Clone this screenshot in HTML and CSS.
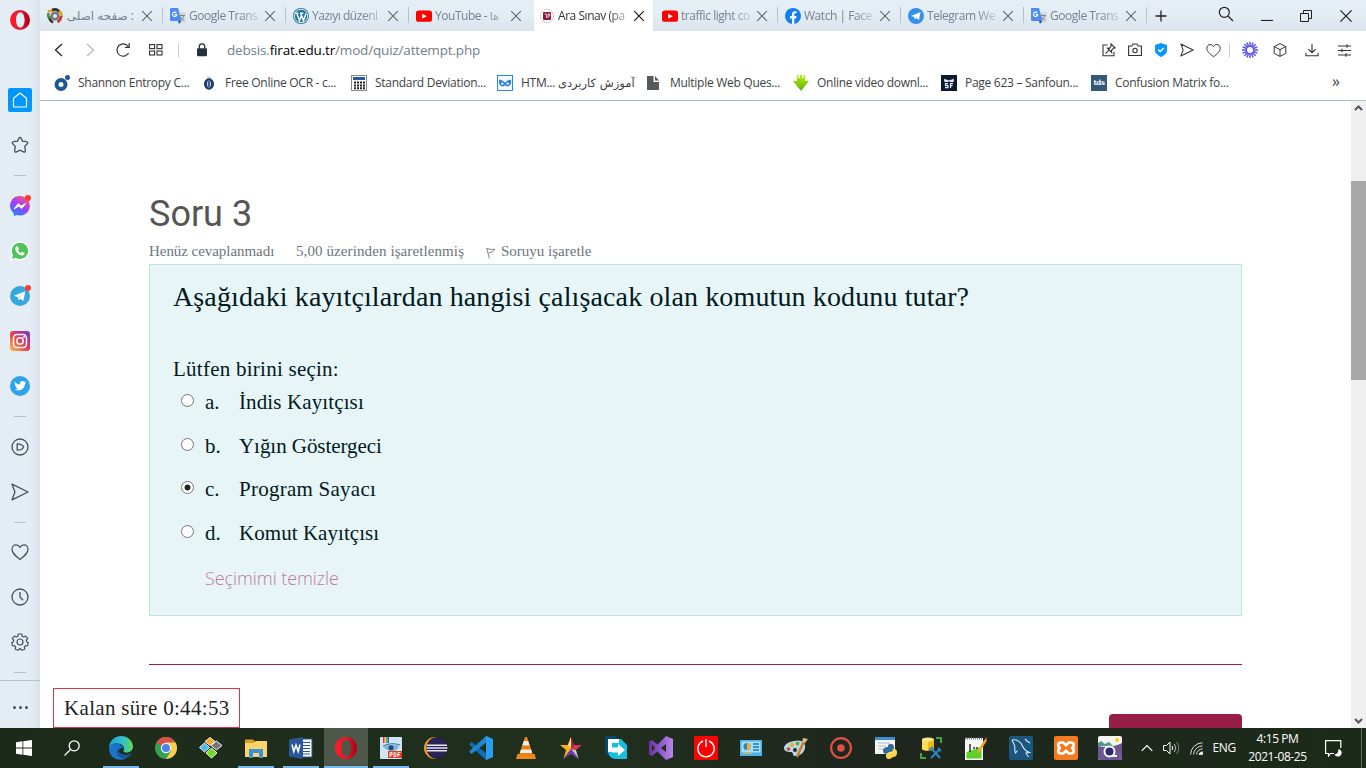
FILE: index.html
```html
<!DOCTYPE html>
<html lang="tr">
<head>
<meta charset="utf-8">
<title>Ara Sınav</title>
<link rel="stylesheet" href="styles.css">
</head>
<body>
<svg class="defs" width="0" height="0" aria-hidden="true">
  <defs>
    <linearGradient id="gOpera" x1="0" y1="0" x2="1" y2="0"><stop offset="0" stop-color="#ff1b2d"/><stop offset=".5" stop-color="#e8192c"/><stop offset="1" stop-color="#a70014"/></linearGradient>
    <linearGradient id="gMsg" x1=".2" y1="1" x2=".8" y2="0"><stop offset="0" stop-color="#1a8cff"/><stop offset=".5" stop-color="#9b3fff"/><stop offset="1" stop-color="#ff5a6e"/></linearGradient>
    <linearGradient id="gInsta" x1="0" y1="1" x2="1" y2="0"><stop offset="0" stop-color="#fdc44f"/><stop offset=".4" stop-color="#f0503f"/><stop offset=".7" stop-color="#c32b90"/><stop offset="1" stop-color="#5a4bd0"/></linearGradient>
    <linearGradient id="gEdge" x1="0" y1=".3" x2="1" y2=".3"><stop offset="0" stop-color="#1f9fe0"/><stop offset=".6" stop-color="#35c3c9"/><stop offset="1" stop-color="#62d94b"/></linearGradient>
    <linearGradient id="gVs" x1="0" y1="0" x2="1" y2="0"><stop offset="0" stop-color="#6a2fa5"/><stop offset="1" stop-color="#b886ea"/></linearGradient>
    <linearGradient id="gArrow" x1="0" y1="0" x2="0" y2="1"><stop offset="0" stop-color="#b5f000"/><stop offset="1" stop-color="#5fae10"/></linearGradient>
    <symbol id="x" viewBox="0 0 12 12"><path d="M1.200 1.200l9.600 9.600M10.800 1.200l-9.600 9.600" fill="none" stroke="currentColor" stroke-width="1.100"/></symbol>
    <symbol id="yt" viewBox="0 0 16 16"><rect y="2.400" width="16" height="11.400" rx="2.600" fill="#f00"/><path d="M6.200 5.700l4.600 2.500-4.600 2.500z" fill="#fff"/></symbol>
    <symbol id="gt" viewBox="0 0 16 16"><path d="M6 4h9a1 1 0 0 1 1 1v10H8z" fill="#dcdcdc"/><path d="M9.500 7.500h5.500M12.200 6.300v1.200M14 7.500c-.5 2-2 3.500-4 4.500M10.500 8.500c.8 2 2 3 3.800 3.800" stroke="#7d8a90" fill="none"/><path d="M1 0h7l3.500 13H1a1 1 0 0 1-1-1V1a1 1 0 0 1 1-1z" fill="#4d8bf5"/><path d="M8 13h3.500L9 16z" fill="#1d59c4"/><path d="M6.300 4.900A2.200 2.200 0 1 0 6.800 6.600H4.700" stroke="#fff" fill="none" stroke-width="1.100"/></symbol>
    <symbol id="opera" viewBox="0 0 20 20"><path fill-rule="evenodd" fill="url(#gOpera)" d="M10 0a10 10 0 1 0 0 20A10 10 0 1 0 10 0zM10.300 2.300c2.500 0 4.300 3.400 4.300 7.700s-1.800 7.700-4.300 7.700S6 14.300 6 10s1.800-7.700 4.300-7.700z"/></symbol>
    <symbol id="heart" viewBox="0 0 18 18"><path d="M9 16.500C4 12.500 1 10 1 6.300 1 3.700 2.800 1.800 5 1.800c1.800 0 3.200 1 4 2.600 .8-1.600 2.200-2.600 4-2.600 2.200 0 4 1.900 4 4.500C17 10 14 12.500 9 16.500z" fill="none" stroke="currentColor" stroke-width="1.200" stroke-linejoin="round"/></symbol>
    <symbol id="send" viewBox="0 0 18 18"><path d="M1 1.200L17 9 1 16.800 4 9z" fill="none" stroke="currentColor" stroke-width="1.300" stroke-linejoin="round"/></symbol>
  </defs>
</svg>

<div class="screen">
  <div class="browser">
    <aside class="sidebar">
      <div class="side-logo"><svg width="20" height="20"><use href="#opera"/></svg></div>
      <div class="side-item"><span class="home"><svg width="16" height="16" viewBox="0 0 16 16"><path d="M1.500 6.200L8 1l6.500 5.200V14a1 1 0 0 1-1 1h-11a1 1 0 0 1-1-1z" fill="none" stroke="#fff" stroke-width="1.200" stroke-linejoin="round"/></svg></span></div>
      <div class="side-item"><svg width="18" height="18" viewBox="0 0 18 18"><path d="M9 1.300c.5 0 .8.400 1 .8l1.500 3 3.900.6c1.300.2 1.700 1.300.8 2.200l-2.500 2.600.6 3.900c.2 1.400-.7 2-1.900 1.400L9 14.200l-3.400 1.600c-1.200.6-2.100 0-1.900-1.400l.6-3.900L1.800 7.900c-.9-.9-.5-2 .8-2.200l3.900-.6 1.500-3c.2-.4.5-.8 1-.8z" fill="none" stroke="currentColor" stroke-width="1.300"/></svg></div>
      <hr class="side-sep">
      <div class="side-item badge"><svg width="20" height="20" viewBox="0 0 20 20"><path d="M10 0a10 9.700 0 1 1-3 19l-3 1-.6-3A9.700 9.700 0 0 1 10 0z" fill="url(#gMsg)"/><path d="M4.200 12.700l4-5 3 2.400 4.600-2.700-4 5-3-2.300z" fill="#fff" stroke="#fff" stroke-linejoin="round"/></svg></div>
      <div class="side-item"><svg width="20" height="20" viewBox="0 0 20 20"><path d="M10.300 1a8.800 8.800 0 1 1-4.600 16.500L1 18.800l1.400-4.600A8.800 8.800 0 0 1 10.300 1z" fill="#4fc35a" stroke="#fff" stroke-width="1.300"/><path d="M6.500 5.300l1.500.2 1 2.500-1 1.200c.7 1.400 1.600 2.200 3 2.800l1.200-1.200 2.300 1.200c.2 1.700-1.200 2.600-2.600 2.500C8.700 14.200 5.600 11 5.300 8c-.1-1.200.5-2.100 1.200-2.700z" fill="#fff"/></svg></div>
      <div class="side-item badge"><svg width="20" height="20" viewBox="0 0 20 20"><circle cx="10" cy="10" r="10" fill="#38a6dc"/><path d="M4 9.800l11.300-4.500-1.900 9.700-3.200-2.300-1.800 1.800-.3-3z" fill="#fff"/><path d="M8.200 11.400l5-4.200-4 4.800z" fill="#a9d2ea"/></svg></div>
      <div class="side-item"><svg width="20" height="20" viewBox="0 0 20 20"><rect width="20" height="20" rx="3" fill="url(#gInsta)"/><rect x="3.500" y="3.500" width="13" height="13" rx="3.500" fill="none" stroke="#fff" stroke-width="1.500"/><circle cx="10" cy="10" r="3.200" fill="none" stroke="#fff" stroke-width="1.500"/><circle cx="14" cy="6" r="1" fill="#fff"/></svg></div>
      <div class="side-item"><svg width="20" height="20" viewBox="0 0 20 20"><circle cx="10" cy="10" r="10" fill="#2ba3ef"/><path d="M4.800 5.800c1.500 1.700 3 2.500 5 2.600-.3-3 2.800-4.200 4.600-2.500l1.600-.6-1 1.500 1.300-.3-1.400 1.400c0 4.500-4.800 8.200-10.400 5.600 1.500 0 2.600-.3 3.300-1-1.200-.2-1.900-.8-2.200-1.700h1C5.400 10.300 4.800 9.500 4.800 8.300l1 .3C4.700 7.800 4.400 6.800 4.800 5.800z" fill="#fff"/></svg></div>
      <hr class="side-sep">
      <div class="side-item"><svg width="18" height="18" viewBox="0 0 18 18" fill="none" stroke="currentColor" stroke-width="1.300"><circle cx="9" cy="9" r="8"/><path d="M6.200 5.800c3 0 5.500 1.200 6.500 3.200-1 2-3.500 3.200-6.500 3.200z" stroke-linejoin="round"/></svg></div>
      <div class="side-item"><svg width="18" height="18"><use href="#send"/></svg></div>
      <hr class="side-sep">
      <div class="side-item"><svg width="18" height="18"><use href="#heart"/></svg></div>
      <div class="side-item"><svg width="18" height="18" viewBox="0 0 18 18" fill="none" stroke="currentColor" stroke-width="1.300"><circle cx="9" cy="9" r="8"/><path d="M9 4v5l3 3.300"/></svg></div>
      <div class="side-item"><svg width="18" height="18" viewBox="0 0 18 18" fill="none" stroke="currentColor" stroke-width="1.200" stroke-linejoin="round"><circle cx="9" cy="9" r="3"/><path d="M7.300 1h3.400l.5 2.300 1.300.7 2.200-1 1.900 2.400-1.300 1.900.3 1.400 1.700 1-.7 3-2.300.2-.9 1.100.3 2.200-2.700 1L9 15.500 7 17.200l-2.700-1 .3-2.200-.9-1.100-2.300-.2-.7-3 1.700-1 .3-1.400L1.400 5.400 3.300 3l2.200 1 1.300-.7z"/></svg></div>
      <hr class="side-sep last">
      <div class="side-more"><i></i><i></i><i></i></div>
    </aside>

    <div class="window">
      <div class="tabbar">
        <div class="tab"><svg class="fav" viewBox="0 0 16 16" fill="none" stroke-width="2.600"><path d="M1 3.500Q4 2 7 3.500" stroke="#e9a13c"/><path d="M5 2q5-2 8 2.500" stroke="#333"/><path d="M12 3q3 2 2.500 6" stroke="#e0a020"/><path d="M14 8q0 4-3.500 6" stroke="#c9342d"/><path d="M2 8q0 4 4 6.500" stroke="#333"/><path d="M2 5q-2 3 1 5" stroke="#3f8f3f"/><circle cx="8" cy="8" r="3.300" stroke="#777"/></svg><span class="tab-text fa" dir="rtl">: صفحه اصلی</span><svg class="close"><use href="#x"/></svg></div>
        <div class="tab"><svg class="fav"><use href="#gt"/></svg><span class="tab-text">Google Trans</span><svg class="close"><use href="#x"/></svg></div>
        <div class="tab"><svg class="fav" viewBox="0 0 16 16"><circle cx="8" cy="8" r="8" fill="#21759b"/><circle cx="8" cy="8" r="6.700" fill="none" stroke="#fff" stroke-width=".9"/><path d="M2.300 5.200h3M6.800 5.200h3.600M3.800 5.400l2.700 7.200 1.900-5.200M7.800 5.400l2.600 7.200L13 5.500" fill="none" stroke="#fff" stroke-width="1.400"/></svg><span class="tab-text">Yazıyı düzenl</span><svg class="close"><use href="#x"/></svg></div>
        <div class="tab"><svg class="fav"><use href="#yt"/></svg><span class="tab-text">YouTube - <em>ها</em></span><svg class="close"><use href="#x"/></svg></div>
        <div class="tab active"><svg class="fav" viewBox="0 0 16 16"><circle cx="8" cy="8" r="6.600" fill="#fff" stroke="#aaa" stroke-dasharray="1.500 1"/><rect x="4" y="4" width="8" height="8" rx="1" fill="#8b1a42"/><path d="M5.500 6h2v4M9 10V6h1.800v2H9" stroke="#e7bccb" fill="none"/></svg><span class="tab-text">Ara Sınav (pa</span><svg class="close"><use href="#x"/></svg></div>
        <div class="tab"><svg class="fav"><use href="#yt"/></svg><span class="tab-text">traffic light co</span><svg class="close"><use href="#x"/></svg></div>
        <div class="tab"><svg class="fav" viewBox="0 0 16 16"><circle cx="8" cy="8" r="8" fill="#1480f0"/><path d="M7 16v-5.500H5V8h2V6.300C7 4.200 8.200 3.200 10 3.200l1.600.1v2h-1c-1 0-1.300.5-1.300 1.300V8h2.200l-.4 2.500H9.300V16z" fill="#fff"/></svg><span class="tab-text">Watch | Face</span><svg class="close"><use href="#x"/></svg></div>
        <div class="tab"><svg class="fav" viewBox="0 0 16 16"><circle cx="8" cy="8" r="8" fill="#3390ec"/><path d="M3 8l9.500-4-1.500 8-2.800-2-1.500 1.500-.3-2.600z" fill="#fff"/></svg><span class="tab-text">Telegram We</span><svg class="close"><use href="#x"/></svg></div>
        <div class="tab"><svg class="fav"><use href="#gt"/></svg><span class="tab-text">Google Trans</span><svg class="close"><use href="#x"/></svg></div>
        <svg class="newtab" width="12" height="12" viewBox="0 0 12 12"><path d="M6 .5v11M.5 6h11" stroke="currentColor" stroke-width="1.300"/></svg>
        <div class="wincontrols">
          <svg class="find" width="16" height="16" viewBox="0 0 16 16" fill="none" stroke="currentColor" stroke-width="1.200"><circle cx="6.300" cy="6.300" r="5"/><path d="M10 10l5 5"/></svg>
          <svg class="min" width="12" height="12" viewBox="0 0 12 12"><path d="M0 11.500h12" stroke="currentColor" stroke-width="1.200"/></svg>
          <svg width="12" height="12" viewBox="0 0 12 12" fill="none" stroke="currentColor"><path d="M.5 3.500h8v8h-8zM3.500 3.500v-3h8v8h-3"/></svg>
          <svg width="14" height="14"><use href="#x"/></svg>
        </div>
      </div>

      <div class="addressbar">
        <div class="nav">
          <svg width="10" height="14" viewBox="0 0 10 14"><path d="M8 1L1.500 7 8 13" fill="none" stroke="#222" stroke-width="1.300"/></svg>
          <svg width="10" height="14" viewBox="0 0 10 14"><path d="M2 1l6.500 6L2 13" fill="none" stroke="#bbb" stroke-width="1.300"/></svg>
          <svg width="15" height="14" viewBox="0 0 15 14"><path d="M12.600 10A6.200 6.200 0 1 1 12.300 3.500M13.200 0v4.300H9" fill="none" stroke="#333" stroke-width="1.200"/></svg>
          <svg class="grid" width="14" height="12" viewBox="0 0 14 12" fill="none" stroke="#333" stroke-width="1.100"><rect x=".6" y=".6" width="5" height="4"/><rect x="8" y=".6" width="5" height="4"/><rect x=".6" y="7" width="5" height="4"/><rect x="8" y="7" width="5" height="4"/></svg>
        </div>
        <i class="vbar"></i>
        <svg class="lock" width="10" height="14" viewBox="0 0 10 14"><path d="M2.300 6V3.500a2.700 2.700 0 0 1 5.400 0V6" fill="none" stroke="#25313b" stroke-width="1.300"/><rect y="5.200" width="10" height="8" rx="1" fill="#25313b"/></svg>
        <span class="url">debsis.<b>firat.edu.tr</b>/mod/quiz/attempt.php</span>
        <div class="tools">
          <svg width="14" height="14" viewBox="0 0 14 14" fill="none" stroke="currentColor" stroke-width="1.100"><path d="M5.500 2H1v10.800h11V9M9 .8l4 4-1.300.3-2.200 2.300.2 2L5.500 5.200l2 .2 1.700-2.500zM7 7.200L3.500 10.700"/></svg>
          <svg width="14" height="14" viewBox="0 0 14 14" fill="none" stroke="currentColor" stroke-width="1.100"><path d="M.6 3h3.200L5 1h4l1.200 2h3.200v9.500H.6z"/><circle cx="7" cy="7.500" r="2.200"/></svg>
          <svg width="14" height="14" viewBox="0 0 14 14"><path d="M7 0l6 2v5.500c0 3-3 5-6 6.500-3-1.500-6-3.500-6-6.500V2z" fill="#0996ff"/><path d="M4.200 6.500l2 2 3.600-3.600" fill="none" stroke="#fff" stroke-width="1.400"/></svg>
          <svg width="14" height="14"><use href="#send"/></svg>
          <svg width="15" height="15"><use href="#heart"/></svg>
          <i class="vbar"></i>
          <svg width="16" height="16" viewBox="0 0 16 16"><path d="M8 0v5M8 11v5M0 8h5M11 8h5M2.300 2.300l3.500 3.500M10.200 10.200l3.500 3.500M2.300 13.700l3.500-3.500M10.200 5.800l3.500-3.500M4.900.6l1.900 4.600M9.200 10.800l1.900 4.600M.6 11.100l4.600-1.900M10.800 6.800l4.600-1.900M.6 4.900l4.600 1.900M10.800 9.200l4.600 1.900M4.900 15.400l1.900-4.600M9.200 5.200l1.900-4.600" stroke="#5b50ee" stroke-width="1.500"/></svg>
          <svg class="cube" width="14" height="14" viewBox="0 0 14 14" fill="none" stroke="currentColor" stroke-linejoin="round"><path d="M7 .6l5.800 3v6.800L7 13.400l-5.800-3V3.600zM1.200 3.600L7 6.600l5.800-3M7 6.600v6.800"/></svg>
          <svg class="down" width="14" height="14" viewBox="0 0 14 14" fill="none" stroke="currentColor" stroke-width="1.100"><path d="M7 1v8.500M3.500 6.200L7 9.700l3.500-3.500M1 10v2.800h12V10"/></svg>
          <svg class="tune" width="13" height="13" viewBox="0 0 13 13" stroke="currentColor" stroke-width="1.100"><path d="M0 2h13M0 6.500h13M0 11h13M9 .3v3.500M4 4.700v3.600M8 9.300v3.400"/></svg>
        </div>
      </div>

      <div class="bookmarks">
        <div class="bm"><svg class="fav" viewBox="0 0 16 16"><circle cx="7" cy="9.500" r="4.500" fill="none" stroke="#1f5592" stroke-width="4"/><circle cx="13.500" cy="2.600" r="2.500" fill="#1f5592"/></svg><span>Shannon Entropy C...</span></div>
        <div class="bm w2"><svg class="fav" viewBox="0 0 16 16"><path d="M5 4q3-6 6 0z" fill="#d8d8d8"/><ellipse cx="8" cy="9" rx="5" ry="5.800" fill="#1c3a6c"/><ellipse cx="8" cy="9" rx="2" ry="3.400" fill="#cdd8ec"/><path d="M8 6v6" stroke="#1c3a6c" stroke-width="1.500"/></svg><span>Free Online OCR - c...</span></div>
        <div class="bm w3"><svg class="fav" viewBox="0 0 16 16"><rect x=".5" y=".5" width="15" height="15" fill="#fff" stroke="#888"/><rect x="2" y="2" width="12" height="3" fill="#2459a6"/><path d="M3 7.500h11M3 10.500h11M3 13.200h11" stroke="#222" stroke-width="2" stroke-dasharray="2 1"/></svg><span>Standard Deviation...</span></div>
        <div class="bm w4"><svg class="fav" viewBox="0 0 16 16" fill="none"><rect x=".5" y=".5" width="15" height="15" fill="#f3f9ff" stroke="#2c86e8"/><path d="M2 4.500l4 1.200 2 2 2-2 4-1.200v4.200l-2.200 2.600H9L8 10l-1 1.300H4.200L2 8.700z" fill="#2580e6"/><circle cx="5.300" cy="8.600" r="1.200" fill="#fff"/><circle cx="10.700" cy="8.600" r="1.200" fill="#fff"/></svg><span>HTM... <em>آموزش کاربردی</em></span></div>
        <div class="bm w5"><svg class="fav" viewBox="0 0 16 16"><path d="M1 1h6.500v6H13v8H1z" fill="#58595b"/><path d="M9 1l4 4.500H9z" fill="#58595b"/></svg><span>Multiple Web Ques...</span></div>
        <div class="bm w6"><svg class="fav" viewBox="0 0 16 16"><path d="M4 0h1.500v3H7V0h2v3h1.500V0H12v6h4l-8 10L0 6h4z" fill="url(#gArrow)"/></svg><span>Online video downl...</span></div>
        <div class="bm w7"><svg class="fav" viewBox="0 0 16 16"><rect width="16" height="16" fill="#0b1a30"/><path d="M3 6.500l.5-3 2 1.200h1L8 5.500l1.500-.8h1l2-1.200.5 3-2 .8-3-.8-3 .8z" fill="#dfe8ef"/><path d="M7 8.700H4.500v2H7v2H4M9.500 13V8.700H12M9.500 10.700h2" fill="none" stroke="#dfe8ef" stroke-width="1.200"/></svg><span>Page 623 – Sanfoun...</span></div>
        <div class="bm w8"><span class="tds">tds</span><span>Confusion Matrix fo...</span></div>
        <span class="more">»</span>
      </div>

      <div class="page">
        <main class="content">
          <h3 class="q-title">Soru 3</h3>
          <div class="q-meta">
            <span class="m1">Henüz cevaplanmadı</span>
            <span class="m2">5,00 üzerinden işaretlenmiş</span>
            <svg width="10" height="12" viewBox="0 0 10 12"><path d="M3.400 11.500L.7 1M1 1.500q4 1.500 8 .8L6 5 2.400 6" fill="none" stroke="#777" stroke-width=".9"/></svg>
            <span class="m3">Soruyu işaretle</span>
          </div>
          <section class="question">
            <p class="q-text">Aşağıdaki kayıtçılardan hangisi çalışacak olan komutun kodunu tutar?</p>
            <p class="prompt">Lütfen birini seçin:</p>
            <div class="option"><i class="radio"></i><span>a.</span><span class="o1">İndis Kayıtçısı</span></div>
            <div class="option"><i class="radio"></i><span>b.</span><span class="o2">Yığın Göstergeci</span></div>
            <div class="option"><i class="radio on"></i><span>c.</span><span class="o3">Program Sayacı</span></div>
            <div class="option"><i class="radio"></i><span>d.</span><span class="o4">Komut Kayıtçısı</span></div>
            <a class="clear">Seçimimi temizle</a>
          </section>
          <hr class="rule">
          <div class="submit"></div>
        </main>
        <div class="timer"><span>Kalan süre 0:44:53</span></div>
        <div class="scrollbar">
          <svg width="9" height="6" viewBox="0 0 9 6"><path d="M1 5l3.500-3.500L8 5" fill="none" stroke="#555" stroke-width="2"/></svg>
          <i class="thumb"></i>
          <svg width="9" height="6" viewBox="0 0 9 6"><path d="M1 1l3.500 3.500L8 1" fill="none" stroke="#555" stroke-width="2"/></svg>
        </div>
      </div>
    </div>
  </div>

  <footer class="taskbar">
    <div class="sys"><svg width="16" height="16" viewBox="0 0 16 16" fill="#fff"><path d="M0 2.200L6.500 1.300v6.300H0zM7.300 1.200L16 0v7.600H7.300zM0 8.400h6.500v6.300L0 13.800zM7.300 8.400H16V16l-8.700-1.200z"/></svg></div>
    <div class="sys search"><svg width="16" height="16" viewBox="0 0 16 16" fill="none" stroke="#fff" stroke-width="1.300"><circle cx="10.200" cy="5.800" r="5"/><path d="M6.500 9.500L.5 15.500"/></svg></div>
    <div class="app open"><svg width="24" height="24" viewBox="0 0 24 24"><path d="M0 12C0 5 5.500 0 12 0s12 5 12 10.500c0 3.800-3 6-6.300 6-2.600 0-3.700-1-3.200-1.800C16.500 11 13 7.500 8.500 7.500 4 7.500.6 9.500 0 12z" fill="url(#gEdge)"/><path d="M0 12c.3-3 4-5 8-4.500 3 .4 5.500 2.500 6.500 4.500-3-.5-5.500 1-5.500 4.500 0 4 4 6.500 9 5.500-6.500 4-18 1.500-18-10z" fill="#1a75c9"/><path d="M9 11.800c-3 4.500 0 10.500 6 11 3.500-.5 6.300-2.500 7.800-5.500-5 2.500-14 2-13.800-5.500z" fill="#155598"/></svg></div>
    <div class="app"><svg width="22" height="22" viewBox="0 0 22 22"><circle cx="11" cy="11" r="11" fill="#36a152"/><path d="M11 11L1.500 5.500A11 11 0 0 1 20.500 5.500H11z" fill="#dd4f43"/><path d="M1.500 5.500A11 11 0 0 1 11 0v8z" fill="#dd4f43"/><path d="M11 5.500h9.500A11 11 0 0 1 11 22l5-8z" fill="#fdcf4a"/><circle cx="11" cy="11" r="5.200" fill="#f3f3f3"/><circle cx="11" cy="11" r="4" fill="#4a82ee"/></svg></div>
    <div class="app"><svg width="24" height="22" viewBox="0 0 24 22" stroke="#f2f2f2"><path d="M11 .5l5 4-5 4-5-4z" fill="#f7a823"/><path d="M5.500 6l5 4.500L5.500 15l-5-4.500z" fill="#49b8f0"/><path d="M17.500 4l5.500 4.500-5.500 4.500-5.500-4.500z" fill="#777"/><path d="M12.500 11l5.500 5-5.500 5L7 16z" fill="#6fdc1c"/></svg></div>
    <div class="app open"><svg width="22" height="20" viewBox="0 0 22 20"><path d="M0 1.500h8l2 2h12V19H0z" fill="#dca021"/><path d="M0 5h9l2-2h11v16H0z" fill="#fdd56b"/><path d="M4 20v-9h14v9h-4v-5H8v5z" fill="#3a94dc"/></svg></div>
    <div class="app open"><svg width="24" height="22" viewBox="0 0 24 22"><path d="M12 2h11v18H12z" fill="#fff" stroke="#2b579a"/><path d="M14 5.500h7M14 8.500h7M14 11.500h7M14 14.500h7M14 17h7" stroke="#2b579a"/><path d="M0 2.500L14 0v22L0 19.500z" fill="#2b579a"/><path d="M3 7.500l1.800 7L7 8l2.200 6.500 1.800-7" fill="none" stroke="#fff" stroke-width="1.500"/></svg></div>
    <div class="app open current"><svg width="22" height="22"><use href="#opera"/></svg></div>
    <div class="app open"><svg width="22" height="22" viewBox="0 0 22 22"><rect width="22" height="22" rx="1" fill="#cfe5f5"/><path d="M3 0h1.500v6H3z" fill="#e23"/><path d="M4.500 0H6v6H4.500z" fill="#fb3"/><path d="M6 0h1.500v6H6z" fill="#3c5"/><path d="M7.500 0H9v6H7.500z" fill="#54c"/><path d="M3 10q7-4 16-1-2 6-8 5-5-1-8-4z" fill="#7fb6d8"/><circle cx="11" cy="10.700" r="2.500" fill="#1d4c78"/><path d="M3 9q8-4 17-1" stroke="#246fa5" fill="none"/><rect x="8" y="14" width="14" height="7" fill="#e03a22"/><path d="M10 20v-4.500h2V18h-2M14 15.500V20h1.200l.8-1v-2.500l-.8-1zM18 20v-4.500h2.500M18 17.700h2" stroke="#fff" fill="none"/></svg></div>
    <div class="app"><svg width="24" height="22" viewBox="0 0 24 22"><circle cx="11" cy="11" r="11" fill="#f39a1e"/><circle cx="13.500" cy="11" r="11" fill="#1e2b1c"/><circle cx="13" cy="11" r="10.500" fill="#2d2255"/><path d="M3 8.300h20M2.500 11h21M3 13.700h20" stroke="#e6e6f0" stroke-width="1.600"/></svg></div>
    <div class="app"><svg width="24" height="24" viewBox="0 0 24 24"><path d="M17 0l7 3v18l-7 3L0 8.500 2.500 6 17 17z" fill="#0b6fb8"/><path d="M17 0l1 6L2.500 18 0 15.500z" fill="#1f86d0"/><path d="M17 0l7 3v18l-7 3z" fill="#2d9cee"/></svg></div>
    <div class="app"><svg width="20" height="22" viewBox="0 0 20 22"><path d="M0 22l1.500-5h17l1.500 5z" fill="#f08a1c"/><path d="M9 0h2l6 18q-7 2.500-14 0z" fill="#f08010"/><path d="M7.800 4h4.400l1.400 4.500H6.400zM5 12.500h10l1.200 3.500H3.800z" fill="#eee"/></svg></div>
    <div class="app"><svg width="22" height="22" viewBox="0 0 22 22"><path d="M11 0l3 8-3 4z" fill="#b3263c"/><path d="M14 8h8l-6 5-5-1z" fill="#d8345a"/><path d="M11 12l5 1 2.500 9z" fill="#c4c4c4"/><path d="M11 0L8 8H0l6 5-2.500 9 7.500-10z" fill="#f7b31c"/><path d="M11 0v12L8 8z" fill="#fde07a"/><path d="M11 12L3.500 22 11 17l7.500 5z" fill="#7733b5"/></svg></div>
    <div class="app"><svg width="22" height="24" viewBox="0 0 22 24"><path d="M0 0h10l6 4H4v16Q0 18 0 14z" fill="#07486a"/><path d="M4 3h12l6 6v14H10q-6-1-7-7V3z" fill="#16bfe0"/><path d="M3 3h11v4H7v9H3z" fill="#fff"/><path d="M7 11.500h6V8l7 6-7 6v-3.500H7z" fill="#fff"/></svg></div>
    <div class="app"><svg width="24" height="24" viewBox="0 0 24 24"><path fill-rule="evenodd" d="M17 0l7 3v18l-7 3-8.500-8.500L3 20l-3-1.500v-13L3 4l5.500 4.500zM17 8l-5 4 5 4zM3 8.500v7L6 12z" fill="url(#gVs)"/></svg></div>
    <div class="app"><svg width="24" height="24" viewBox="0 0 24 24"><path d="M0 0h24v24H0z" fill="#f00"/><path d="M9 5a8.200 8.200 0 1 0 6 0M12 3v8" fill="none" stroke="#fff" stroke-width="1.400"/></svg></div>
    <div class="app"><svg width="22" height="16" viewBox="0 0 22 16"><rect width="22" height="16" fill="#49b2e6"/><rect x="1.500" y="1.500" width="19" height="11" fill="#a9def7"/><circle cx="7" cy="6.500" r="3.600" fill="#2e84c8"/><path d="M7 6.500V2.900a3.600 3.600 0 0 1 0 7.200z" fill="#f5b02c"/><path d="M13 4h6M13 7h6M13 10h6" stroke="#1678b8" stroke-width="1.400"/><path d="M3 13.500h9" stroke="#f5b02c"/></svg></div>
    <div class="app"><svg width="24" height="22" viewBox="0 0 24 22"><path d="M10 4c7-2 12 1 11 7-1 5-5 8-10 8-3 0-1-4-4-4-4 0-7-1-7-4s4-6 10-7z" fill="#b7d8ea"/><circle cx="8" cy="8" r="2.200" fill="#e8b62f"/><circle cx="13.500" cy="6.500" r="2" fill="#5cab3b"/><circle cx="4.500" cy="12" r="1.800" fill="#d3422e"/><circle cx="11" cy="13" r="2" fill="#1d2b33"/><path d="M13 20L20 4" stroke="#cf7a29" stroke-width="2.500"/><path d="M18 5l1-4 5 1-3 4z" fill="#d9b88a"/></svg></div>
    <div class="app"><svg width="22" height="22" viewBox="0 0 22 22"><circle cx="11" cy="11" r="9.900" fill="none" stroke="#e04f44" stroke-width="2.200"/><circle cx="11" cy="11" r="3.800" fill="#e04f44"/></svg></div>
    <div class="app"><svg width="22" height="22" viewBox="0 0 22 22"><path d="M0 0h20v17H0z" fill="#f3f5f7"/><path d="M0 0h20v3H0z" fill="#3e8fd3"/><path d="M3 6h12M3 9h8M3 12h5" stroke="#b6bdc4"/><path d="M15 7c4 0 4 1 4 5s-5 2-6 4-5 1-5-2 2-4 5-4V8z" fill="#34699b"/><path d="M15 22c-4 0-4-1-4-5 2-2 7 0 7-5 4 0 4 2 4 4s-1 4-4 4z" fill="#fbd54a"/></svg></div>
    <div class="app"><svg width="22" height="22" viewBox="0 0 22 22"><path d="M16 1h5v5M1 16v5h5" fill="none" stroke="#3fa544" stroke-width="2"/><path d="M2 2.500v9c0 3 12 3 12 0v-9z" fill="#f2b70e"/><path d="M2 2.500h6v11q-6 0-6-2z" fill="#fbdc57"/><ellipse cx="8" cy="2.500" rx="6" ry="2" fill="#ffe794"/><path d="M11 11l9 10M20 12l-9 9" stroke="#2e86c9" stroke-width="2"/><path d="M18 11l3 3M9 13l4-3" stroke="#2e86c9" stroke-width="2"/></svg></div>
    <div class="app"><svg width="22" height="23" viewBox="0 0 22 23"><path d="M0 1h18v22H0z" fill="#f6f6f2"/><path d="M0 1.500h18" stroke="#777" stroke-dasharray="1 1" stroke-width="2"/><path d="M1.500 15l15-5v11.500h-15z" fill="#5ed029"/><path d="M5 7v8M8 11h2M11 11h2" stroke="#333" stroke-width="1.500"/><path d="M12 17l1-4 7-11 2 1.500-7 11z" fill="#f0a524"/><path d="M20 2l.8-2 1.200 1.200-.2 2z" fill="#c44"/></svg></div>
    <div class="app"><svg width="24" height="24" viewBox="0 0 24 24"><rect width="24" height="24" rx="2" fill="#1b567f"/><path d="M3 4c5-1 9 2 10.500 6 1 3 3.500 5 7 6.500l-3.500.5 2.500 4M3 4l2.500 5.500c1 3-.5 4.500 1 7.500l2-2.500M16 3l2 2 3 2" fill="none" stroke="#dbe8f1" stroke-width="1.100"/></svg></div>
    <div class="app"><svg width="24" height="24" viewBox="0 0 24 24"><rect width="24" height="24" rx="2" fill="#f47b20"/><path d="M7 6.500h2.300L12 9.200l2.700-2.700H17a2.700 2.700 0 0 1 0 5.500 2.700 2.700 0 0 1 0 5.500h-2.300L12 14.800l-2.700 2.700H7A2.700 2.700 0 0 1 7 12a2.700 2.700 0 0 1 0-5.500z" fill="none" stroke="#fff" stroke-width="2.700"/></svg></div>
    <div class="app last"><svg width="24" height="24" viewBox="0 0 24 24"><rect width="24" height="24" rx="2" fill="#f5f4ee"/><path d="M0 7l3-2 4 3 4-2 4 4H0z" fill="#4a9a8f"/><path d="M0 10q12 3 24-3v15a2 2 0 0 1-2 2H2a2 2 0 0 1-2-2z" fill="#6a5795"/><circle cx="19" cy="4" r="2" fill="#f2d31b"/><circle cx="11.500" cy="15.500" r="5" fill="#312a72" stroke="#fff" stroke-width="2"/><path d="M14 20h5" stroke="#fff" stroke-width="1.800"/></svg></div>
    <div class="tray">
      <svg class="t-up" width="12" height="8" viewBox="0 0 12 8"><path d="M.7 6.800L6 1.500l5.300 5.300" fill="none" stroke="#fff" stroke-width="1.200"/></svg>
      <svg class="t-vol" width="17" height="14" viewBox="0 0 17 14" fill="none" stroke="#fff"><path d="M.6 4.500h2.900L7 1v12L3.500 9.500H.6z"/><path d="M9 5q1.500 2 0 4"/><path d="M11.300 3q3 4 0 8" opacity=".7"/><path d="M13.500 1q4.500 6 0 12" opacity=".4"/></svg>
      <svg class="t-net" width="13" height="13" viewBox="0 0 13 13" fill="none" stroke="#ddd"><path d="M.6 12.500A12 12 0 0 1 12.500.8M3.600 12.500a9 9 0 0 1 8.900-8.600M6.600 12.500a6 6 0 0 1 5.900-5.600"/><path d="M9 12.500q.5-2.500 3.500-2.700v2.700z" fill="#fff"/></svg>
      <span class="lang">ENG</span>
      <div class="clock"><span>4:15 PM</span><span>2021-08-25</span></div>
      <svg class="t-note" width="17" height="17" viewBox="0 0 17 17"><path d="M9 13.500H5.500L3.500 16v-2.500H.6V.6h15.200V8" fill="none" stroke="#fff" stroke-width="1.200"/><path d="M13.500 9a3.800 3.800 0 1 1-4 5.500q4-.5 4-5.500z" fill="#fff"/></svg>
      <i class="peek"></i>
    </div>
  </footer>
</div>
</body>
</html>
```
FILE: styles.css
```css
* { box-sizing: border-box; }
body { margin: 0; font-family: "Open Sans", "DejaVu Sans", sans-serif; font-size: 12px; overflow: hidden; }
svg { display: block; flex: none; }
i { display: block; }
.defs { position: absolute; }
.screen { width: 1366px; height: 768px; display: flex; flex-direction: column; }
.browser { flex: 1; min-height: 0; display: flex; background: #e4ecf4; }

.sidebar { width: 40px; display: flex; flex-direction: column; align-items: center; color: #46505e; background: linear-gradient(90deg, #e4ecf4 75%, #d9e1ea); }
.side-logo { height: 77.500px; padding-top: 10px; flex: none; }
.side-item { height: 45px; flex: none; display: flex; align-items: center; position: relative; }
.home { width: 24px; height: 24px; background: #0096ff; border-radius: 2px; display: grid; place-items: center; }
.badge::after { content: ""; position: absolute; top: 12px; right: -1px; width: 6px; height: 6px; border-radius: 50%; background: #ff3b30; }
.side-sep { width: 12px; height: 1px; margin: 7.500px 0 7.300px; border: 0; background: #b4c3d0; flex: none; }
.side-sep.last { margin-bottom: 7px; }
.side-more { width: 40px; flex: 1; border-top: 1px solid #b4c3d0; padding-top: 6px; display: flex; gap: 3px; align-items: center; justify-content: center; }
.side-more i { width: 3px; height: 3px; border-radius: 50%; background: #46505e; }

.window { flex: 1; min-width: 0; display: flex; flex-direction: column; }
.tabbar { height: 31px; display: flex; align-items: center; background: linear-gradient(#e5edf5 40%, #dae2eb); color: #555; }
.tab { width: 123px; height: 31px; padding-left: 7px; display: flex; align-items: center; position: relative; }
.tab::after { content: ""; position: absolute; right: 0; top: 7px; width: 1px; height: 16px; background: #b7c1cb; }
.tab:has(+ .active)::after, .tab.active::after { display: none; }
.fav { width: 16px; height: 16px; }
.tab-text { width: 71.500px; margin: 0 3.500px 0 3px; flex: none; overflow: hidden; white-space: nowrap; color: #74838f; line-height: 18px; letter-spacing: -.46px; -webkit-mask-image: linear-gradient(90deg, #000 70%, rgba(0,0,0,.15)); mask-image: linear-gradient(90deg, #000 70%, rgba(0,0,0,.15)); }
.tab-text em { font: 11px "DejaVu Sans", sans-serif; letter-spacing: 0; }
.tab-text.fa { width: 68px; margin-right: 7px; letter-spacing: 0; -webkit-mask-image: none; mask-image: none; }
.close { width: 12px; height: 12px; color: #5c6670; }
.tab.active { width: 119px; margin: 0 2px; padding-left: 5px; background: #fff; color: #111; }
.active .tab-text { color: #333; }
.active .close { color: #111; }
.newtab { margin-left: 8px; color: #222; }
.wincontrols { margin-left: auto; padding-right: 13px; display: flex; align-items: center; gap: 27px; color: #222; }
.find { margin-bottom: 3px; }
.min { margin-bottom: 1px; }

.addressbar { height: 38px; padding: 0 15px 0 14px; background: #fff; display: flex; align-items: center; }
.nav { display: flex; align-items: center; gap: 21px; }
.grid { margin-left: -3px; }
.vbar { width: 1px; height: 14px; background: #cfcfcf; }
.nav + .vbar { margin-left: 15px; }
.lock { margin-left: 18px; }
.url { margin-left: 20px; font-size: 13.500px; color: #71808c; line-height: 20px; letter-spacing: -.17px; }
.url b { font-weight: 400; color: #000; }
.tools { margin-left: auto; display: flex; align-items: center; gap: 12px; color: #333; }
.tools .vbar { margin-left: -3.500px; }
.cube { margin-left: 3px; }
.down { margin-left: 6px; }
.tune { margin-left: 7px; }

.bookmarks { height: 32px; padding: 0 26px 4px 14px; background: #fff; border-bottom: 1px solid #aebecb; display: flex; align-items: center; color: #3c3f43; }
.bm { width: 147px; display: flex; align-items: center; gap: 8px; white-space: nowrap; line-height: 18px; letter-spacing: -.28px; }
.bm em { font: 11.500px "DejaVu Sans", sans-serif; letter-spacing: 0; }
.w2, .w8 { width: 150px; }
.w3 { width: 146px; }
.w4 { width: 149px; }
.w6 { width: 148px; }
.w7 { width: 150px; }
.tds { width: 16px; height: 16px; background: #355876; color: #fff; font: bold 7px/15px "DejaVu Serif", serif; text-align: center; }
.more { margin-left: auto; font-size: 16px; line-height: 18px; padding-bottom: 3px; }

.page { flex: 1; min-height: 0; position: relative; background: #fff; font-family: "Liberation Serif", serif; display: flex; overflow: hidden; }
.content { width: 1093px; margin-left: 109px; padding-top: 91px; display: flex; flex-direction: column; }
.q-title { margin: 0; font: 400 36px/44px Roboto, sans-serif; color: #555; }
.q-meta { height: 28px; flex: none; padding-top: 6px; display: flex; align-items: flex-start; font-size: 15px; line-height: 18px; color: #6c757d; white-space: nowrap; }
.q-meta svg { margin-top: 5px; }
.m1 { width: 147px; letter-spacing: -.05px; }
.m2 { width: 190px; letter-spacing: .1px; }
.m3 { margin-left: 5px; }
.question { height: 352px; flex: none; padding: 14px 23px; background: #e7f5f7; border: 1px solid #bfe3e7; color: #001a1e; white-space: nowrap; }
.q-text { margin: 0; font-size: 28px; line-height: 36px; letter-spacing: .125px; }
.prompt { margin: 40px 0 0; font-size: 21px; line-height: 28px; letter-spacing: .25px; }
.option { height: 43.600px; padding: 5px 0 0 8px; display: flex; font-size: 21px; line-height: 28px; }
.radio { width: 13px; height: 13px; margin: 6px 11px 0 0; border: 1px solid #767676; border-radius: 50%; background: #fff; }
.radio.on { background: radial-gradient(circle, #222 2.700px, #fff 3.300px); }
.option span:nth-child(2) { width: 34px; }
.o1 { letter-spacing: .12px; }
.o2 { letter-spacing: -.05px; }
.o3 { letter-spacing: .25px; }
.o4 { letter-spacing: .05px; }
.clear { display: block; margin: 8px 0 0 32px; font: 300 18px/26px "Open Sans", sans-serif; letter-spacing: -.08px; color: #bf7d9a; }
.rule { width: 100%; height: 1px; margin: 48px 0 49px; border: 0; background: #981e48; flex: none; }
.submit { width: 133px; height: 40px; flex: none; align-self: flex-end; border-radius: 4px; background: #981e48; }
.timer { position: absolute; left: 13px; bottom: 0; width: 187px; height: 40px; border: 1px solid #dc3545; background: #fff; padding-left: 10px; font-size: 21px; line-height: 38px; letter-spacing: .32px; color: #222; white-space: nowrap; }
.scrollbar { width: 15px; margin-left: auto; padding: 4px 0; background: #f0f0f0; display: flex; flex-direction: column; align-items: center; justify-content: space-between; }
.thumb { width: 15px; height: 199px; margin: 70px 0 auto; background: #a8a8a8; }

.taskbar { height: 40px; display: flex; background: linear-gradient(90deg, #1c2a1a, #20301d 40%, #1f261e 66%, #1c2b19); color: #fff; }
.sys { width: 48px; display: grid; place-items: center; }
.sys.search { width: 50.500px; padding-right: 2px; }
.app { width: 45px; display: grid; place-items: center; position: relative; }
.app.open::after { content: ""; position: absolute; left: 4.500px; right: 4.500px; bottom: 0; height: 2px; background: #76b9ed; }
.app.current { background: linear-gradient(#4d584b, #4d584b) center / 44px 40px no-repeat; }
.app.current::after { left: .5px; right: .5px; }
.app.last { padding-right: 2px; }
.tray { flex: 1; display: flex; align-items: center; }
.t-up { margin-left: 7px; }
.t-vol { margin-left: 10px; }
.t-net { margin-left: 10px; }
.lang { width: 32px; margin-left: 10px; line-height: 18px; letter-spacing: -.4px; }
.clock { width: 66px; display: flex; flex-direction: column; align-items: center; line-height: 18px; white-space: nowrap; letter-spacing: -.42px; }
.t-note { margin-left: 14px; }
.peek { width: 1px; height: 40px; margin-left: auto; margin-right: 4px; background: #5f6b5d; }
```
